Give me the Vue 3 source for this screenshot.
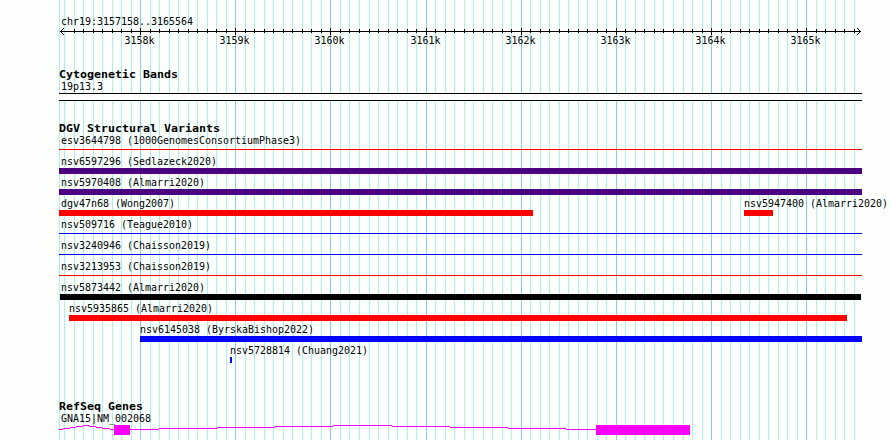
<template>
  <div class="browser">
    <svg class="grid" width="890" height="440" aria-hidden="true">
      <rect
        v-for="line in gridLines"
        :key="line.x"
        :class="line.major ? 'major' : 'minor'"
        :x="line.x"
        y="0"
        width="1"
        height="440"
      />
    </svg>

    <header class="ruler">
      <div class="label region">chr19:3157158..3165564</div>
      <svg class="axis" width="890" height="20">
        <g shape-rendering="crispEdges">
          <rect x="60" y="3" width="801" height="1" />
          <template v-for="n in 3" :key="n">
            <rect :x="60 + n" :y="3 - n" width="1" height="1" />
            <rect :x="60 + n" :y="3 + n" width="1" height="1" />
            <rect :x="860 - n" :y="3 - n" width="1" height="1" />
            <rect :x="860 - n" :y="3 + n" width="1" height="1" />
          </template>
          <rect
            v-for="tick in ticks.slice(1)"
            :key="tick.x"
            :x="tick.x"
            :y="tick.major ? 0 : 1"
            width="1"
            :height="tick.major ? 7 : 4"
          />
        </g>
        <text
          v-for="tick in majorTicks"
          :key="tick.name"
          :transform="`translate(${tick.x - 15.5} 16) scale(0.906 1)`"
        >
          {{ tick.name }}
        </text>
      </svg>
    </header>

    <section class="bands">
      <h2>Cytogenetic Bands</h2>
      <div class="label">19p13.3</div>
      <div class="band" />
    </section>

    <section class="variants">
      <h2>DGV Structural Variants</h2>
      <div v-for="(row, i) in rows" :key="i" class="row">
        <div
          v-for="item in row"
          :key="item.name"
          class="feature"
          :style="{ marginLeft: item.gap + 'px', width: item.width + 'px' }"
        >
          <div class="label" :class="item.align">{{ item.name }}</div>
          <div class="bar" :class="[item.color, { thin: item.thin }]" />
        </div>
      </div>
    </section>

    <section class="genes">
      <h2>RefSeq Genes</h2>
      <div class="label">GNA15|NM_002068</div>
      <svg class="gene" width="803" height="10" shape-rendering="crispEdges">
        <rect
          v-for="s in intronSteps"
          :key="s[0]"
          :x="s[0] - LEFT"
          :y="s[2]"
          :width="s[1] - s[0]"
          height="1"
        />
        <rect x="55" y="0" width="16" height="10" />
        <rect x="537" y="0" width="94" height="10" />
      </svg>
    </section>
  </div>
</template>

<script setup>
const LEFT = 59;
const START = 3157158;
const END = 3165564;
const SCALE = 800 / (END - START + 1);

const ticks = [];
for (let pos = 3157200; pos <= 3165500; pos += 100) {
  const major = pos % 1000 === 0;
  ticks.push({
    x: Math.round(60 + (pos - START) * SCALE),
    major,
    name: major ? `${pos / 1000}k` : "",
  });
}
const majorTicks = ticks.filter((t) => t.major);
const gridLines = [{ x: LEFT, major: false }, ...ticks];

// gap is the distance from the previous feature in the row (or the left edge)
const rows = [
  [{ name: "esv3644798 (1000GenomesConsortiumPhase3)", gap: 0, width: 803, color: "red", thin: true }],
  [{ name: "nsv6597296 (Sedlazeck2020)", gap: 0, width: 803, color: "purple" }],
  [{ name: "nsv5970408 (Almarri2020)", gap: 0, width: 803, color: "purple" }],
  [
    { name: "dgv47n68 (Wong2007)", gap: 0, width: 474, color: "red" },
    { name: "nsv5947400 (Almarri2020)", gap: 211, width: 29, color: "red", align: "inner" },
  ],
  [{ name: "nsv509716 (Teague2010)", gap: 0, width: 803, color: "blue", thin: true }],
  [{ name: "nsv3240946 (Chaisson2019)", gap: 0, width: 803, color: "blue", thin: true }],
  [{ name: "nsv3213953 (Chaisson2019)", gap: 0, width: 803, color: "red", thin: true }],
  [{ name: "nsv5873442 (Almarri2020)", gap: 1, width: 801, color: "black", align: "flush" }],
  [{ name: "nsv5935865 (Almarri2020)", gap: 10, width: 778, color: "red", align: "inner" }],
  [{ name: "nsv6145038 (ByrskaBishop2022)", gap: 81, width: 722, color: "blue", align: "inner" }],
  [{ name: "nsv5728814 (Chuang2021)", gap: 171, width: 2, color: "blue", align: "inner" }],
];

// [from, to, y] pieces of the stepped intron arcs
const intronSteps = [
  [59, 63, 4],
  [63, 70, 3],
  [70, 76, 2],
  [76, 83, 1],
  [83, 89, 0],
  [89, 96, 1],
  [96, 102, 2],
  [102, 110, 3],
  [110, 114, 4],
  [130, 159, 4],
  [159, 217, 3],
  [217, 275, 2],
  [275, 333, 1],
  [333, 392, 0],
  [392, 450, 1],
  [450, 508, 2],
  [508, 566, 3],
  [566, 596, 4],
];
</script>

<style>
body {
  margin: 0;
  background: #fdfffc;
}
</style>

<style scoped>
.browser {
  position: relative;
  width: 890px;
  height: 440px;
  overflow: hidden;
  background: #fdfffc;
  color: #000;
  font: 11px/13px "DejaVu Sans Mono", monospace;
}
.grid {
  position: absolute;
  inset: 0;
  shape-rendering: crispEdges;
}
.grid .minor {
  fill: #afeeee;
}
.grid .major {
  fill: #87ceeb;
}
.ruler,
section {
  position: relative;
}
.ruler {
  padding-top: 15px;
}
.axis {
  display: block;
}
section {
  padding-left: 59px;
}
.label {
  height: 13px;
  width: max-content;
  white-space: nowrap;
  margin-left: 1.5px;
  transform: scaleX(0.906);
  transform-origin: 0 0;
}
.label.region {
  margin-left: 60.5px;
}
.label.flush {
  margin-left: 0.5px;
}
.label.inner {
  margin-left: -0.5px;
}
h2 {
  width: max-content;
  height: 12px;
  margin: 0;
  font-size: 11px;
  line-height: 13px;
  font-weight: bold;
  white-space: nowrap;
  transform: scaleX(1.057);
  transform-origin: 0 0;
}
.bands {
  padding-top: 20px;
}
.band {
  box-sizing: border-box;
  width: 803px;
  height: 8px;
  border: solid #000;
  border-width: 1px 0;
  background: #fdfffc;
}
.variants {
  padding-top: 21px;
}
.row {
  display: flex;
  height: 21px;
}
.feature {
  flex: none;
}
.bar {
  height: 6px;
}
.bar.thin {
  height: 1px;
  margin-top: 2px;
}
.red {
  background: #ff0000;
}
.blue {
  background: #0000ff;
}
.purple {
  background: #4b0082;
}
.black {
  background: #000;
}
.genes {
  padding-top: 35px;
}
.gene {
  display: block;
  fill: #ff00ff;
}
</style>
